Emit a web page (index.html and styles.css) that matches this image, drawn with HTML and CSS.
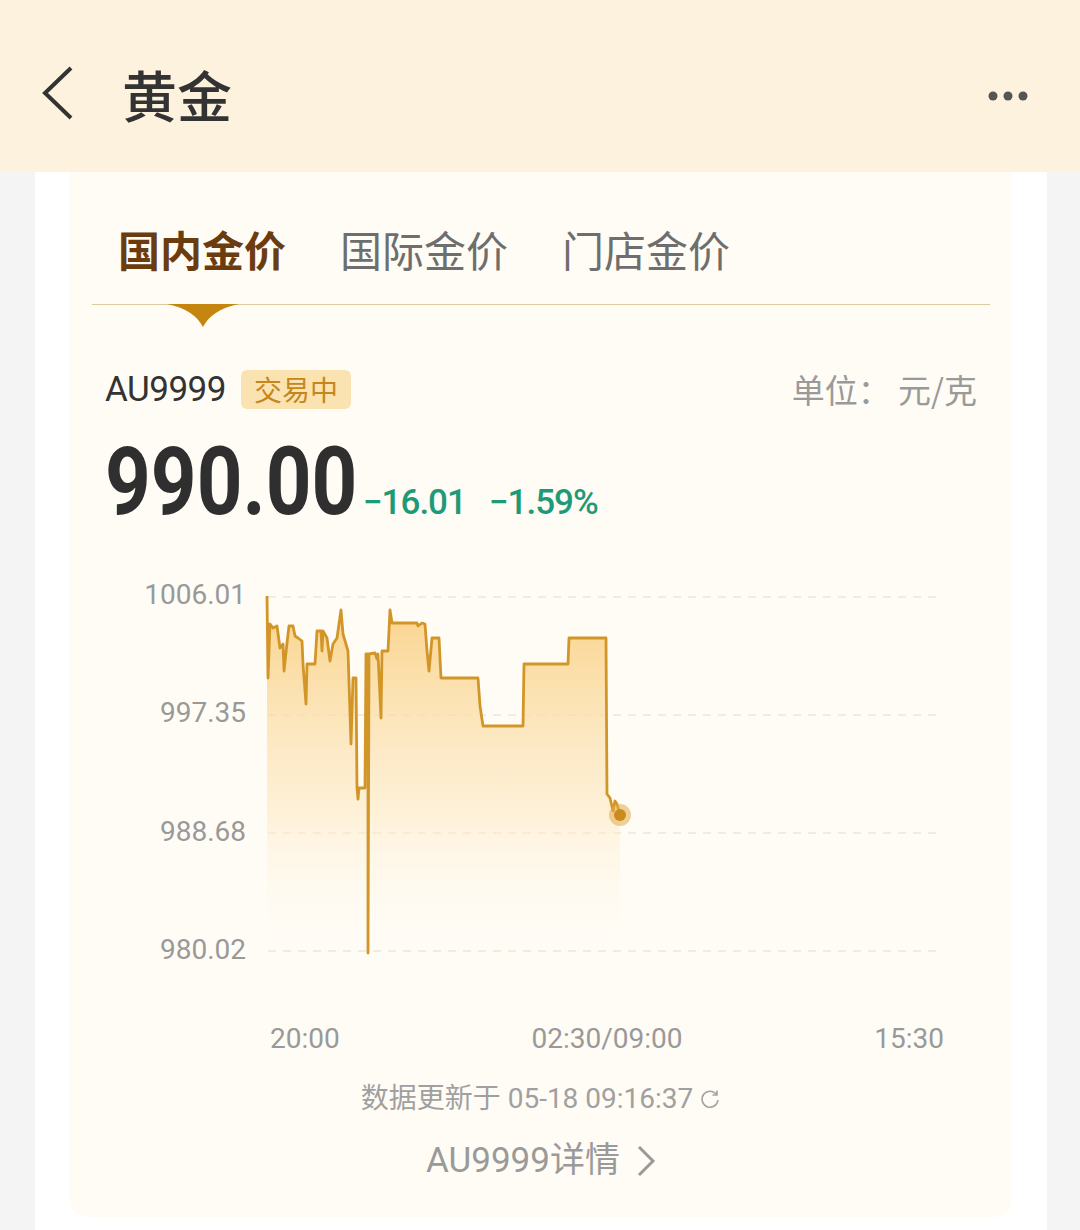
FILE: index.html
```html
<!DOCTYPE html>
<html lang="zh-CN">
<head>
  <meta charset="UTF-8">
  <title>黄金</title>
  <link rel="stylesheet" href="styles.css">
</head>
<body>

  <div class="topbar">
    <svg class="back" width="36" height="56" viewBox="0 0 36 56">
      <polyline points="31,3 5,28 31,53" fill="none" stroke="#333" stroke-width="4"/>
    </svg>
    <h1 class="title">黄金</h1>
    <svg class="more" width="44" height="12" viewBox="0 0 44 12">
      <circle cx="6" cy="6" r="4.5" fill="#555"/>
      <circle cx="21" cy="6" r="4.5" fill="#555"/>
      <circle cx="36" cy="6" r="4.5" fill="#555"/>
    </svg>
  </div>

  <div class="sheet">
    <div class="card">

      <div class="tabs">
        <span class="tab active">国内金价</span>
        <span class="tab">国际金价</span>
        <span class="tab">门店金价</span>
        <svg class="tab-arrow" width="72" height="24" viewBox="0 0 72 24">
          <path d="M0 0 H72 C52 4 42 12 36 23 C30 12 20 4 0 0 Z" fill="#c5860f"/>
        </svg>
      </div>

      <div class="info-row">
        <div class="symbol">
          <span class="code">AU9999</span>
          <span class="badge">交易中</span>
        </div>
        <span class="unit">单位：&nbsp;元/克</span>
      </div>

      <div class="price-row">
        <span class="price">990.00</span>
        <span class="change">−16.01</span>
        <span class="change">−1.59%</span>
      </div>

      <div class="chart">
        <div class="y-axis">
          <span>1006.01</span>
          <span>997.35</span>
          <span>988.68</span>
          <span>980.02</span>
        </div>
        <svg class="plot" width="700" height="385" viewBox="0 0 700 385">
          <defs>
            <linearGradient id="area" x1="0" y1="0" x2="0" y2="1">
              <stop offset="0" stop-color="#f9cf82" stop-opacity="0.95"/>
              <stop offset="0.6" stop-color="#fde9c3" stop-opacity="0.6"/>
              <stop offset="1" stop-color="#fffcf5" stop-opacity="0"/>
            </linearGradient>
          </defs>
          <g stroke="#efe5d3" stroke-width="1.5" stroke-dasharray="8 7">
            <line x1="22" y1="17" x2="694" y2="17"/>
            <line x1="22" y1="135" x2="694" y2="135"/>
            <line x1="22" y1="253" x2="694" y2="253"/>
            <line x1="22" y1="371" x2="694" y2="371"/>
          </g>
          <path id="fill" fill="url(#area)" d=""/>
          <path id="line" fill="none" stroke="#d29628" stroke-width="2.8" stroke-linejoin="round" d=""/>
          <circle cx="374" cy="235" r="11" fill="#e2a94a" opacity="0.55"/>
          <circle cx="374" cy="235" r="6" fill="#c98a1e"/>
        </svg>
      </div>

      <div class="x-axis">
        <span>20:00</span>
        <span>02:30/09:00</span>
        <span>15:30</span>
      </div>

      <div class="updated">
        数据更新于 05-18 09:16:37
        <svg width="22" height="22" viewBox="0 0 22 22">
          <path d="M17.5 6.5 A8 8 0 1 0 19 12" fill="none" stroke="#a3a3a3" stroke-width="1.6"/>
          <polyline points="18,2.5 18,7 13.5,7" fill="none" stroke="#a3a3a3" stroke-width="1.6"/>
        </svg>
      </div>

      <div class="detail">
        AU9999详情
        <svg width="20" height="32" viewBox="0 0 20 32">
          <polyline points="3,2 17,16 3,30" fill="none" stroke="#9a9a9a" stroke-width="3"/>
        </svg>
      </div>

    </div>
  </div>

  <script>
    // intraday points (x, y) in plot coordinates
    const pts = [
      [21,16],[22,98],[24,44],[27,48],[31,46],[34,68],[37,64],[38,91],[41,63],[43,46],
      [47,46],[49,56],[52,58],[56,61],[57,84],[60,124],[61,84],[69,84],[71,51],[75,51],
      [76,71],[77,51],[81,58],[84,81],[87,64],[91,58],[95,30],[97,54],[102,71],[105,164],
      [107,98],[110,98],[111,208],[112,219],[113,208],[119,208],[120,74],[122,74],[122,373],
      [123,74],[129,73],[131,79],[132,74],[135,138],[136,71],[142,71],[144,30],[146,43],
      [171,43],[172,46],[176,43],[179,44],[181,71],[183,91],[186,58],[193,58],[195,98],
      [232,98],[234,126],[237,146],[277,146],[278,84],[322,84],[323,58],[360,58],[361,214],
      [364,218],[367,231],[369,221],[371,224],[374,235]
    ];
    const d = pts.map((p, i) => (i ? "L" : "M") + p[0] + " " + p[1]).join(" ");
    document.getElementById("line").setAttribute("d", d);
    document.getElementById("fill").setAttribute("d", d + " L374 371 L21 371 Z");
  </script>

</body>
</html>
```

FILE: styles.css
```css
* {
  box-sizing: border-box;
}

body {
  margin: 0;
  background-color: #f4f4f4;
  font-family: Roboto, "Noto Sans CJK SC", sans-serif;
  color: #333;
}

.topbar {
  height: 172px;
  padding: 14px 49px 0 40px;
  background-color: #fdf2dd;
  display: flex;
  align-items: center;
}

.title {
  margin: 0 0 0 46px;
  font-family: "Noto Sans CJK SC", sans-serif;
  font-size: 55px;
  font-weight: 500;
  color: #333;
  flex: 1;
}

.more {
  margin-top: 6px;
}

.sheet {
  margin: 0 33px 0 35px;
  padding: 0 35px 13px;
  background-color: #fff;
}

.card {
  height: 1045px;
  background-color: #fffcf5;
  border-radius: 0 0 18px 18px;
  overflow: hidden;
}

/* tabs */
.tabs {
  position: relative;
  margin: 0 22px;
  padding: 47px 0 25px 26px;
  border-bottom: 1.5px solid #dccb9f;
  display: flex;
  gap: 54px;
}

.tab {
  font-family: "Noto Sans CJK SC", sans-serif;
  font-size: 42px;
  line-height: 60px;
  color: #6e6e6e;
}

.tab.active {
  font-weight: 700;
  color: #6b3c0f;
}

.tab-arrow {
  position: absolute;
  left: 75px;
  top: 100%;
}

/* quote */
.info-row {
  margin-top: 60px;
  padding: 0 35px;
  display: flex;
  justify-content: space-between;
  align-items: center;
}

.symbol {
  display: flex;
  align-items: center;
  gap: 15px;
}

.code {
  font-size: 35px;
  letter-spacing: -0.5px;
  color: #333;
}

.badge {
  height: 39px;
  padding: 0 13px;
  border-radius: 6px;
  background-color: #fbe3b1;
  color: #c4871d;
  font-family: "Noto Sans CJK SC", sans-serif;
  font-size: 28px;
  line-height: 39px;
}

.unit {
  font-family: "Noto Sans CJK SC", sans-serif;
  font-size: 33px;
  color: #9a9a9a;
}

.price-row {
  margin-top: 19px;
  padding: 0 35px;
  display: flex;
  align-items: baseline;
  line-height: 100px;
}

.price {
  display: inline-block;
  font-size: 94px;
  font-weight: 700;
  color: #2f2f2f;
  transform: scaleX(0.85);
  transform-origin: left;
  margin-right: -39px;
}

.change {
  margin-right: 23px;
  font-size: 35px;
  font-weight: 500;
  letter-spacing: -1px;
  color: #1f9a77;
}

/* chart */
.chart {
  margin-top: 27px;
  display: flex;
}

.y-axis {
  width: 176px;
  height: 385px;
  display: flex;
  flex-direction: column;
  justify-content: space-between;
  align-items: flex-end;
  font-size: 28px;
  line-height: 30px;
  color: #999;
}

.plot {
  display: block;
}

.x-axis {
  margin: 59px 68px 0 200px;
  display: flex;
  justify-content: space-between;
  font-size: 28px;
  line-height: 30px;
  color: #999;
}

.updated {
  margin-top: 27px;
  display: flex;
  justify-content: center;
  align-items: center;
  gap: 6px;
  font-size: 28px;
  line-height: 36px;
  color: #a0a0a0;
}

.detail {
  margin-top: 19px;
  display: flex;
  justify-content: center;
  align-items: center;
  gap: 16px;
  font-size: 35px;
  line-height: 50px;
  color: #9a9a9a;
}
```
